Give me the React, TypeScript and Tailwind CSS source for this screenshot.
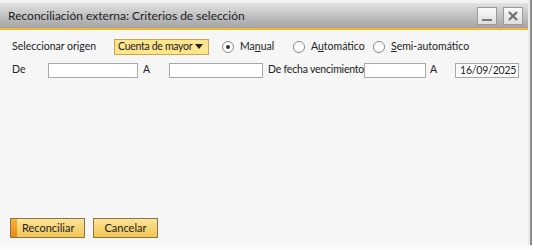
import React from "react";

const font = { fontFamily: 'Lato, "Open Sans", sans-serif' };

function Radio({ checked, label, u }: { checked?: boolean; label: string; u: number }) {
  return (
    <label className="flex items-center gap-[6px] whitespace-nowrap">
      <span className="w-[12px] h-[12px] rounded-full border border-[#8a8a8a] bg-white flex items-center justify-center">
        {checked && <span className="w-[4px] h-[4px] rounded-full bg-[#333]" />}
      </span>
      <span>
        {label.slice(0, u)}
        <span className="underline">{label[u]}</span>
        {label.slice(u + 1)}
      </span>
    </label>
  );
}

function Field({ w, value }: { w: string; value?: string }) {
  return (
    <div className={`${w} shrink-0 h-[15px] bg-white border border-[#a9a9a9] px-[4px] leading-[13px] text-[10.5px] tracking-[-0.2px]`}>
      {value}
    </div>
  );
}

export default function App() {
  return (
    <div className="w-[533px] h-[250px] bg-white overflow-hidden text-[#222]" style={font}>
      <div className="flex h-[245px]">
        <div className="w-[529px] flex flex-col border-r border-[#e8e8e8]">
          <div className="h-[3px] bg-[#f2f2f2]" />
          <div className="h-[25px] bg-gradient-to-b from-[#e2e2e2] to-[#a3a3a3] flex items-center pl-[8px] pr-[5px]">
            <span className="text-[12px] text-[#1e1e1e] flex-1 whitespace-nowrap">
              Reconciliación externa: Criterios de selección
            </span>
            <div className="flex gap-[6px]">
              <div className="w-[20px] h-[18px] bg-gradient-to-b from-[#fafafa] to-[#dedede] border border-[#9a9a9a] flex items-end justify-center pb-[3px]">
                <div className="w-[10px] h-[2px] bg-[#777]" />
              </div>
              <div className="w-[20px] h-[18px] bg-gradient-to-b from-[#fafafa] to-[#dedede] border border-[#9a9a9a] flex items-center justify-center">
                <svg width="10" height="10" viewBox="0 0 10 10">
                  <path d="M1 1 L9 9 M9 1 L1 9" stroke="#6f6f6f" strokeWidth="2.2" />
                </svg>
              </div>
            </div>
          </div>
          <div className="h-[2px] bg-[#f0b82a]" />
          <div className="flex-1 bg-[#f6f6f6] flex flex-col text-[10.5px] whitespace-nowrap">
            <div className="flex items-center h-[16px] mt-[9px] pl-[12px]">
              <span className="w-[102px]">Seleccionar origen</span>
              <div className="w-[95px] h-[16px] bg-[#fde58e] border border-[#c8a64a] flex items-center pl-[3px] pr-[5px] justify-between">
                <span className="tracking-[-0.3px]">Cuenta de mayor</span>
                <svg width="8" height="6" viewBox="0 0 8 6">
                  <path d="M0 0 L8 0 L4 5 Z" fill="#222" />
                </svg>
              </div>
              <div className="ml-[13px] w-[71px]">
                <Radio checked label="Manual" u={2} />
              </div>
              <div className="w-[80px]">
                <Radio label="Automático" u={1} />
              </div>
              <Radio label="Semi-automático" u={0} />
            </div>
            <div className="flex items-center h-[16px] mt-[7px] pl-[12px]">
              <span className="w-[36px]">De</span>
              <Field w="w-[90px]" />
              <span className="ml-[5px] w-[26px]">A</span>
              <Field w="w-[94px]" />
              <span className="ml-[5px] w-[96px] tracking-[-0.2px]">De fecha vencimiento</span>
              <Field w="w-[62px]" />
              <span className="ml-[4px] w-[25px]">A</span>
              <Field w="w-[64px]" value="16/09/2025" />
            </div>
            <div className="flex-1" />
            <div className="flex gap-[8px] pl-[10px] mb-[7px]">
              <button className="w-[75px] h-[20px] border border-[#8d7440] bg-gradient-to-b from-[#fbe396] to-[#f2c553] flex items-center text-[11px]">
                <span className="w-[6px] h-full bg-gradient-to-b from-[#f8b03a] to-[#e98a0c]" />
                <span className="pl-[5px]">Reconciliar</span>
              </button>
              <button className="w-[65px] h-[20px] border border-[#8d7440] bg-gradient-to-b from-[#fbe396] to-[#f2c553] text-[11px]">
                Cancelar
              </button>
            </div>
          </div>
        </div>
        <div className="w-[1px] bg-[#f0f0f0]" />
        <div className="w-[2px] bg-[#8c8c8c]" />
      </div>
      <div className="h-[5px] bg-[#fbfbfb]" />
    </div>
  );
}
